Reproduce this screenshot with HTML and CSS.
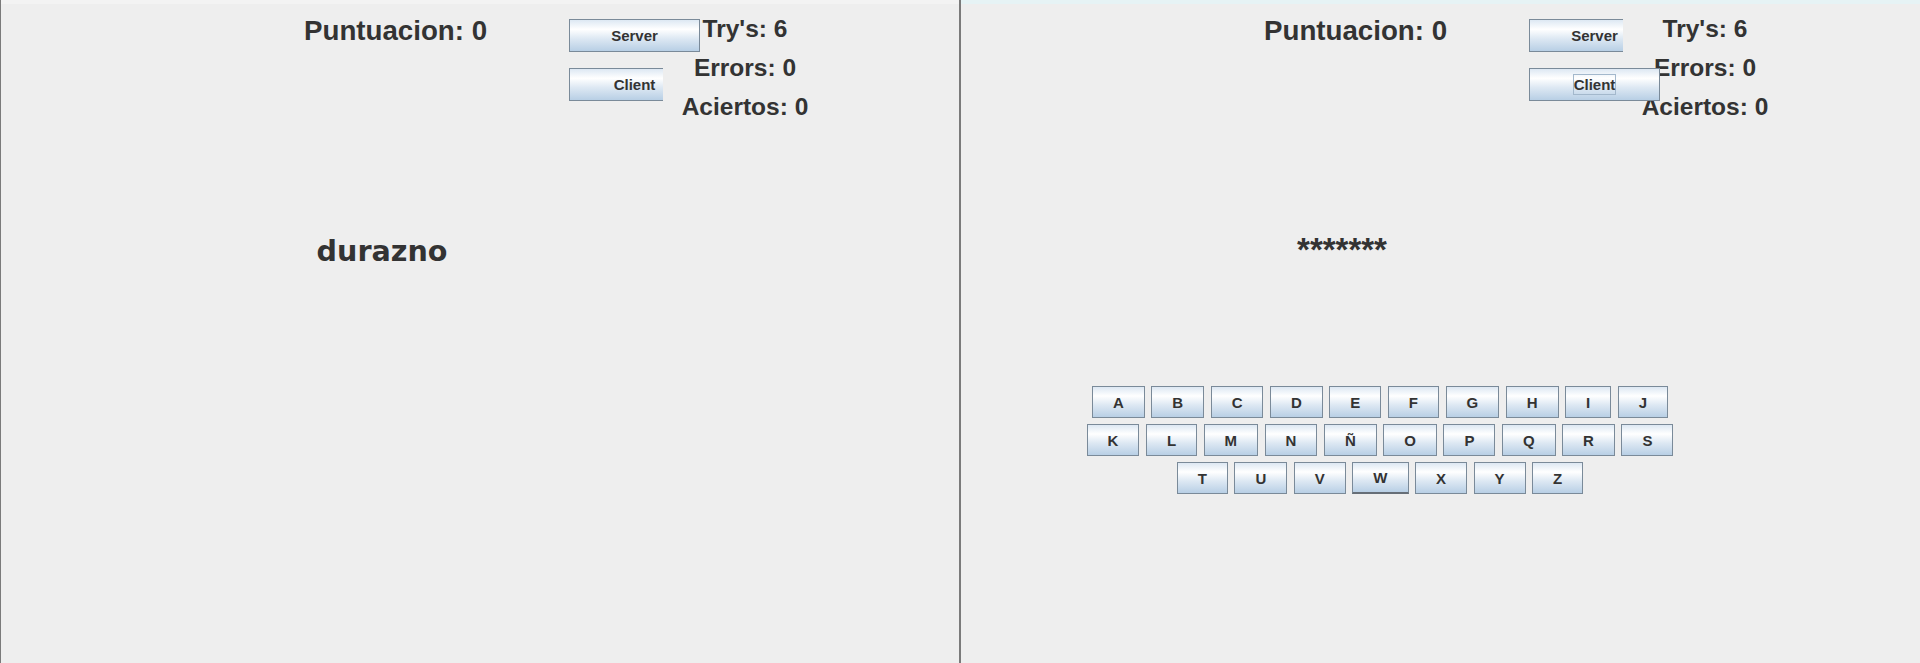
FILE: index.html
```html
<!DOCTYPE html>
<html lang="es">
<head>
<meta charset="utf-8">
<title>Ahorcado</title>
<link rel="stylesheet" href="styles.css">
</head>
<body>
<div class="screen">
  <section class="pane pane-left">
    <div class="strip"></div>
    <div class="header">
      <div class="score">Puntuacion: 0</div>
      <div class="buttons">
        <button class="btn">Server</button>
        <div class="clip"><button class="btn">Client</button></div>
      </div>
      <div class="stats">
        <div>Try's: 6</div>
        <div>Errors: 0</div>
        <div>Aciertos: 0</div>
      </div>
    </div>
    <div class="word">durazno</div>
  </section>

  <section class="pane pane-right">
    <div class="strip"></div>
    <div class="header">
      <div class="score">Puntuacion: 0</div>
      <div class="buttons">
        <div class="clip"><button class="btn">Server</button></div>
        <button class="btn"><span class="focus">Client</span></button>
      </div>
      <div class="stats">
        <div>Try's: 6</div>
        <div>Errors: 0</div>
        <div>Aciertos: 0</div>
      </div>
    </div>
    <div class="word masked">*******</div>
    <div class="keyboard">
      <div class="row">
        <button class="key">A</button><button class="key">B</button><button class="key">C</button><button class="key">D</button><button class="key">E</button><button class="key">F</button><button class="key">G</button><button class="key">H</button><button class="key">I</button><button class="key">J</button>
      </div>
      <div class="row">
        <button class="key">K</button><button class="key">L</button><button class="key">M</button><button class="key">N</button><button class="key">Ñ</button><button class="key">O</button><button class="key">P</button><button class="key">Q</button><button class="key">R</button><button class="key">S</button>
      </div>
      <div class="row">
        <button class="key">T</button><button class="key">U</button><button class="key">V</button><button class="key hover">W</button><button class="key">X</button><button class="key">Y</button><button class="key">Z</button>
      </div>
    </div>
  </section>
</div>
</body>
</html>
```

FILE: styles.css
```css
html, body {
  margin: 0;
  padding: 0;
  background: #eeeeee;
}

body {
  font-family: "Liberation Sans", Arial, sans-serif;
  color: #333333;
}

.screen {
  display: flex;
  height: 663px;
  overflow: hidden;
}

.pane {
  width: 960px;
  flex: none;
  box-sizing: border-box;
  border-left: 1px solid #7a7a7a;
  background: #eeeeee;
  display: flex;
  flex-direction: column;
}

.pane-left {
  border-right: 1px solid #7a7a7a;
}

.strip {
  height: 4px;
  background: #f3f3f3;
}

.pane-right .strip {
  background: #e6f3f5;
}

.header {
  display: flex;
  align-items: flex-start;
}

.score {
  margin: 7px 0 0 303px;
  width: 265px;
  font-weight: bold;
  font-size: 27.7px;
  line-height: 39px;
  white-space: nowrap;
}

.buttons {
  width: 94px;
  margin-top: 15px;
  display: flex;
  flex-direction: column;
  align-items: flex-start;
  gap: 16px;
}

.btn {
  position: relative;
  z-index: 1;
  display: block;
  width: 131px;
  height: 33px;
  flex: none;
  box-sizing: border-box;
  margin: 0;
  padding: 0;
  border: 1px solid #7a8a99;
  background: linear-gradient(to bottom, #dde8f3 0%, #ffffff 30%, #dde8f3 60%, #b8cfe5 100%);
  font-family: "Liberation Sans", Arial, sans-serif;
  font-weight: bold;
  font-size: 15px;
  color: #333333;
  text-align: center;
}

.clip {
  position: relative;
  z-index: 1;
  width: 94px;
  height: 33px;
  overflow: hidden;
}

.focus {
  display: inline-block;
  border: 1px solid #a3b8cc;
  line-height: 19px;
}

.stats {
  width: 164px;
  margin-top: 5px;
  text-align: center;
  font-weight: bold;
  font-size: 24.5px;
  line-height: 39px;
  white-space: nowrap;
}

.word {
  margin: 105px 0 0 281px;
  width: 200px;
  text-align: center;
  font-family: "DejaVu Sans", Verdana, sans-serif;
  font-weight: bold;
  font-size: 28.6px;
  line-height: 40px;
}

.word.masked {
  margin-top: 104px;
  font-family: "Liberation Sans", Arial, sans-serif;
  font-size: 33px;
}

.keyboard {
  margin: 116px 0 0 99px;
  width: 640px;
  display: flex;
  flex-direction: column;
  align-items: center;
  gap: 6px;
}

.row {
  display: flex;
  justify-content: center;
  gap: 6.5px;
}

.row-wide {
  gap: 7px;
}

.key {
  height: 32px;
  box-sizing: border-box;
  margin: 0;
  padding: 0 20px;
  border: 1px solid #7a8a99;
  background: linear-gradient(to bottom, #dde8f3 0%, #ffffff 30%, #dde8f3 60%, #b8cfe5 100%);
  font-family: "Liberation Sans", Arial, sans-serif;
  font-weight: bold;
  font-size: 15px;
  color: #333333;
}

.key.hover {
  border-bottom: 2px solid #666e77;
}
```
